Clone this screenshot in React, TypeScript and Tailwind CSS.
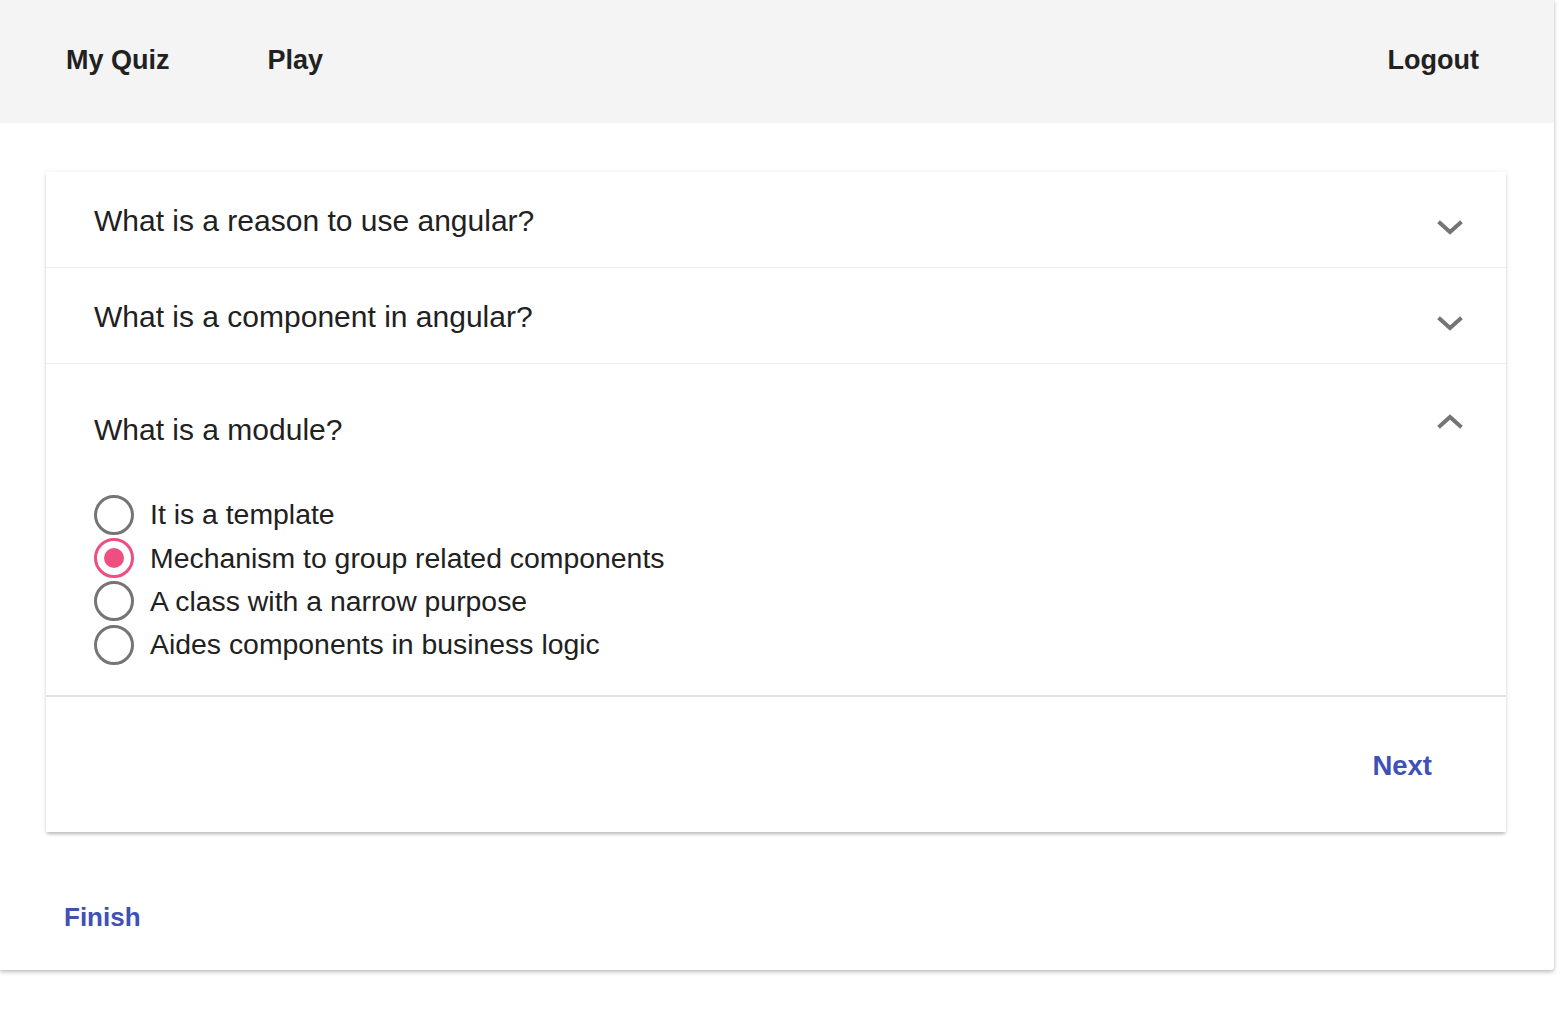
import { useState } from "react"

const questions = [
    { id: 1, text: "What is a reason to use angular?" },
    { id: 2, text: "What is a component in angular?" },
    { id: 3, text: "What is a module?" },
]

const answers = [
    "It is a template",
    "Mechanism to group related components",
    "A class with a narrow purpose",
    "Aides components in business logic",
]

const Chevron = ({ up }: { up?: boolean }) => (
    <svg width="26" height="16" viewBox="0 0 26 16" fill="none" stroke="#757575" strokeWidth="4" strokeLinecap="square">
        {up ? <path d="M3 13l10-9 10 9" /> : <path d="M3 3l10 9 10-9" />}
    </svg>
)

const Radio = ({ checked }: { checked: boolean }) => (
    <span className={`flex h-[40px] w-[40px] shrink-0 items-center justify-center rounded-full border-[3px] ${checked ? "border-[#ed4f82]" : "border-[#757575]"}`}>
        {checked && <span className="h-[20px] w-[20px] rounded-full bg-[#ed4f82]" />}
    </span>
)

export default function App() {
    const [open, setOpen] = useState(3)
    const [picked, setPicked] = useState(1)

    return (
        <div className="min-h-screen bg-white font-['Liberation_Sans',Arial,sans-serif] text-[#212121]">
            <div className="w-[1554px] h-[970px] bg-white shadow-[0_2px_4px_rgba(0,0,0,0.25),0_0_2px_rgba(0,0,0,0.1)] rounded-br-[3px]">
                <nav className="flex h-[123px] items-center bg-[#f4f4f4] pl-[66px] pr-[75px] pb-[2px] text-[27px] font-bold">
                    <span>My Quiz</span>
                    <span className="ml-[98px]">Play</span>
                    <span className="ml-auto">Logout</span>
                </nav>

                <div className="pl-[46px] pr-[48px] pt-[49px]">
                    <div className="bg-white shadow-[0_3px_3px_-1px_rgba(0,0,0,0.22),0_1px_6px_0_rgba(0,0,0,0.1)]">
                        {questions.map((q, i) => (
                            <div key={q.id} className={i > 0 ? "border-t border-[#efefef]" : ""}>
                                <button
                                    type="button"
                                    onClick={() => setOpen(q.id)}
                                    className={`flex w-full items-center pl-[48px] pr-[43px] text-left text-[30px] ${open === q.id ? "h-[128px]" : "h-[95px]"}`}
                                >
                                    <span className={open === q.id ? "mt-[3px]" : "mt-[1px]"}>{q.text}</span>
                                    <span className={`ml-auto ${open === q.id ? "-mt-[14px]" : "mt-[16px]"}`}>
                                        <Chevron up={open === q.id} />
                                    </span>
                                </button>
                                {open === q.id && (
                                    <div className="pl-[48px] pt-[1px] pb-[29px]">
                                        {answers.map((a, j) => (
                                            <label key={a} className="flex h-[43.3px] cursor-pointer items-center gap-[16px] text-[28.4px]" onClick={() => setPicked(j)}>
                                                <Radio checked={picked === j} />
                                                <span>{a}</span>
                                            </label>
                                        ))}
                                    </div>
                                )}
                            </div>
                        ))}
                        <div className="flex h-[137px] items-center justify-end border-t-2 border-[#e0e0e0] pr-[74px] pt-[1px]">
                            <button type="button" className="text-[27.5px] font-bold text-[#3f51b5]">Next</button>
                        </div>
                    </div>

                    <div className="pt-[66px] pl-[18px]">
                        <button type="button" className="text-[26px] font-bold text-[#3f51b5]">Finish</button>
                    </div>
                </div>
            </div>
        </div>
    )
}
